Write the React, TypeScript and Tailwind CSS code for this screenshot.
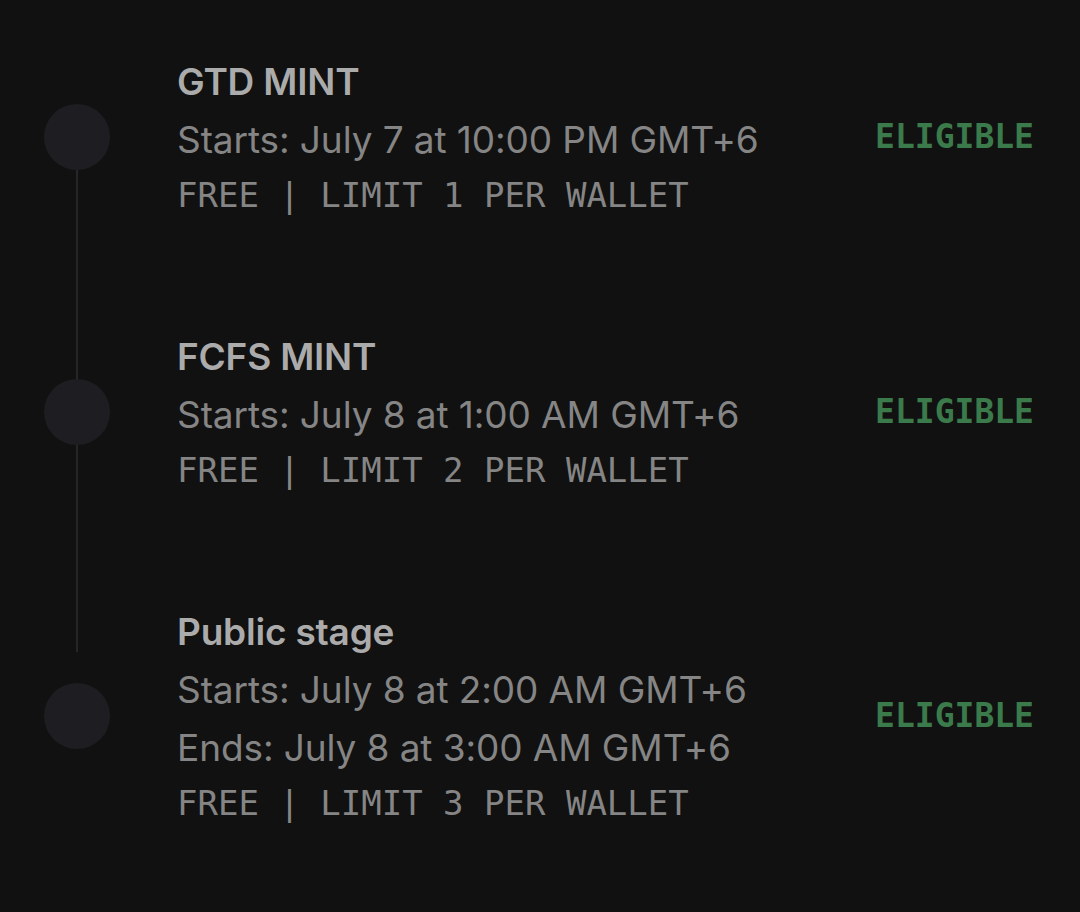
const stages = [
  {
    name: "GTD MINT",
    dates: ["Starts: July 7 at 10:00 PM GMT+6"],
    terms: "FREE | LIMIT 1 PER WALLET",
  },
  {
    name: "FCFS MINT",
    dates: ["Starts: July 8 at 1:00 AM GMT+6"],
    terms: "FREE | LIMIT 2 PER WALLET",
  },
  {
    name: "Public stage",
    dates: ["Starts: July 8 at 2:00 AM GMT+6", "Ends: July 8 at 3:00 AM GMT+6"],
    terms: "FREE | LIMIT 3 PER WALLET",
  },
];

export default function App() {
  return (
    <div className="min-h-screen w-full bg-[#111111] font-['Inter',sans-serif]">
      <div className="relative flex flex-col gap-[107px] pt-[53px] pb-[80px]">
        {/* timeline rail */}
        <div className="absolute left-[76px] top-[169px] h-[483px] w-[2px] bg-[#262628]" />
        {stages.map((stage) => (
          <div key={stage.name} className="relative flex items-center">
            <div className="flex w-[177px] shrink-0 pl-[44px]">
              <div className="h-[66px] w-[66px] rounded-full bg-[#1e1e22]" />
            </div>
            <div className="flex flex-1 flex-col">
              <div className="text-[37px] font-semibold leading-[58px] tracking-[-0.2px] text-[#ababab]">
                {stage.name}
              </div>
              {stage.dates.map((d) => (
                <div key={d} className="text-[37px] leading-[58px] tracking-[-0.1px] text-[#858585]">
                  {d}
                </div>
              ))}
              <div className="font-['DejaVu_Sans_Mono',monospace] text-[34px] leading-[52px] text-[#858585]">
                {stage.terms}
              </div>
            </div>
            <div className="pr-[46px] font-['DejaVu_Sans_Mono',monospace] text-[33px] font-bold text-[#3b7a4b]">
              ELIGIBLE
            </div>
          </div>
        ))}
      </div>
    </div>
  );
}
